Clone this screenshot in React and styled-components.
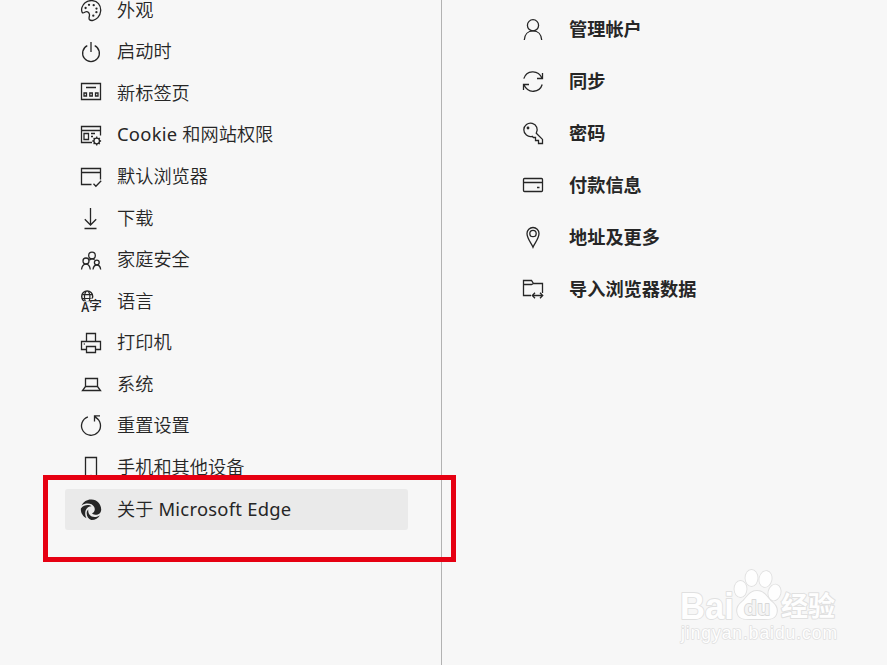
import React from 'react'
import styled, { createGlobalStyle } from 'styled-components'

const GlobalStyle = createGlobalStyle`
    *{
        box-sizing:border-box;
    }
    body{
        margin:0;
        overflow:hidden;
        background:#f7f7f7;
    }
`

const Page = styled.div`
    position:relative;
    display:flex;
    width:887px;
    height:665px;
    overflow:hidden;
    background:#f7f7f7;
    color:#262626;
    font-family:"Open Sans","Noto Sans CJK SC",sans-serif;
    font-size:18.2px;
`

const Sidebar = styled.nav`
    flex:0 0 442px;
    height:665px;
    padding:0 33px 0 65px;
    border-right:1px solid #b2b2b2;
`

const MenuList = styled.div`
    display:grid;
    grid-auto-rows:41.58px;
    margin-top:-9.9px;
`

const MenuItem = styled.div`
    display:flex;
    align-items:center;
    gap:15px;
    height:41px;
    padding-left:15px;
    border-radius:3px;
    background:${({ $active }) => ($active ? '#eaeaea' : 'transparent')};
    font-weight:350;
    line-height:20px;
    white-space:nowrap;
`

const Content = styled.main`
    display:grid;
    flex:1;
    grid-auto-rows:52px;
    align-content:start;
    padding:3px 0 0 80px;
`

const ContentItem = styled.div`
    display:flex;
    align-items:center;
    gap:25px;
    font-weight:700;
    line-height:24px;
    white-space:nowrap;
`

const Icon = styled.svg`
    flex:0 0 22px;
    width:22px;
    height:22px;
    overflow:visible;
    fill:none;
    stroke:#262626;
    stroke-width:1.3;
    .solid{
        fill:#262626;
        stroke:none;
    }
    text{
        fill:#262626;
        stroke:none;
        font-family:"Open Sans","Noto Sans CJK SC",sans-serif;
    }
`

const MenuLabel = styled.span`
    padding-bottom:2px;
`

const Latin = styled.span`
    font-family:"Noto Sans","Open Sans",sans-serif;
    font-size:18.4px;
    font-weight:400;
    letter-spacing:0.25px;
`

const Highlight = styled.div`
    position:absolute;
    left:43px;
    top:475px;
    width:413px;
    height:87px;
    border:5px solid #e60012;
`

const Watermark = styled.svg`
    position:absolute;
    left:670px;
    top:560px;
    width:180px;
    height:95px;
    fill:#fefefe;
    stroke:#e0e0e0;
    stroke-width:1.8;
    stroke-linejoin:round;
    paint-order:stroke;
    font-family:"Liberation Sans","Noto Sans CJK SC",sans-serif;
`

const icons = {
    palette: (
        <>
            <path d="M2.2 12.5C.7 9.5 2.1 5.2 5.1 2.8C9-.4 15.3-.2 18.5 3.7C21.8 7.7 21.3 13.8 17.8 17.6C15.1 20.5 10.8 21.3 9.4 19.5C8.3 18 9.9 16.2 9.4 14.2C8.8 11.8 6.8 11.2 5.2 12C4 12.7 3 13.5 2.2 12.5Z" />
            {[[5.6, 8], [9, 4.8], [13.7, 5.2], [16.5, 8.6], [16.4, 12.2], [13.3, 15.7]].map(([x, y]) => (
                <circle key={x} className="solid" cx={x} cy={y} r="1.15" />
            ))}
        </>
    ),
    power: <path d="M11 1v10M7.3 4.6A8.4 8.4 0 1 0 14.7 4.6" />,
    newTab: <path d="M1.5.5h19v16h-19zM6 4.5h10M4 10h2.500v3H4zM9.800 10h2.500v3H9.800zM15.500 10H18v3h-2.500z" />,
    cookie: (
        <>
            <path d="M12 18.5H1.500v-16h19v9M1.5 6.500h19M4 9.500h4.500v6H4zM11 9.500h4M11 12.500h2" />
            <circle cx="16.700" cy="17" r="2.800" />
            <path d="M16.700 12.500v1.800M16.700 19.700v1.800M12.300 17h1.800M19.300 17h1.800M13.600 13.900l1.200 1.200M18.600 18.900l1.200 1.200M13.600 20.100l1.200-1.200M18.600 15.100l1.200-1.200" />
        </>
    ),
    browser: <path d="M11.500 18.500h-10v-16h19v11M1.500 6.500h19M13.500 17.800l2.400 2.500 5.300-5.600" />,
    download: <path d="M10.500 0v17M4.800 11.300l5.700 5.700 5.700-5.700M4.500 20.500h12" />,
    family: (
        <>
            <circle cx="12" cy="6.500" r="3.300" />
            <circle cx="6" cy="12" r="3" />
            <circle cx="16.800" cy="13.500" r="2.400" />
            <path d="M1.500 20.500C2 17 3.500 15.200 6 15.200S9.800 17 10.300 20.500M13 20.500C13.400 17.700 14.600 16 16.800 16s3.500 1.700 3.900 4.500M9.300 11.200c1.700-1.700 3.700-1.700 5.300-.6" />
        </>
    ),
    language: (
        <>
            <circle cx="7.200" cy="5.500" r="5.500" strokeWidth="1.400" />
            <path d="M2.300 3.600h9.800M2 7.500h10.400M5.500 11C4.100 7.500 4.200 3.200 6 .4M8.900 11C10.300 7.500 10.200 3.200 8.400.4" strokeWidth="1.200" />
            <path d="M3.500 10.200h7v-2.700h5v13H1z" fill="#f7f7f7" stroke="none" />
            <text x="1.200" y="21" fontSize="13.500" fontWeight="600" textLength="8" lengthAdjust="spacingAndGlyphs">A</text>
            <text x="9.200" y="18.700" fontSize="12.500" fontWeight="500">字</text>
        </>
    ),
    printer: (
        <>
            <path d="M6.500 9V1.500h9V9M6.500 17.500h-5v-8h19v8h-5M6.500 14.500h9v6h-9z" />
            <circle className="solid" cx="4.300" cy="12" r=".7" />
        </>
    ),
    laptop: <path d="M5.500 4.500h12v8h-12zM5.500 12.500L2.500 16.500h18l-3-4" />,
    reset: <path d="M7.900 1.800A9.500 9.500 0 1 0 15.500 2.400M20 .9h-5.500v5.500M14.800 1.200l3.300 3.300" />,
    phone: (
        <>
            <path d="M5.500.5h11v21h-11z" />
            <circle className="solid" cx="11" cy="18.700" r="1" />
        </>
    ),
    edge: (
        <g className="solid">
            <path d="M1.500 6.500C3.500 2.500 7.200.3 11.500.5C17 .7 21.200 5 21.200 10.500C21.200 14 18.500 16 15.300 15.800C13.600 15.700 12.500 15 12 14.300C14.500 13.500 15.500 10.500 14.200 8C12 4 6 3.500 1.500 6.500Z" />
            <path d="M.9 9.500C4 5.700 9.200 5.300 11.500 7.300C7.500 7.500 5.200 10.600 5.200 14.200C5.200 16.200 5.800 17.800 6.500 19.300C2.800 17.500.4 13.500.9 9.500Z" />
            <path d="M8.300 10.500C7.600 14.500 10.500 18 14.500 18C16.700 18 18.600 17.300 20 16.200C18.200 19.400 14.800 21.200 11.300 21C8.500 20.200 6.600 17.500 6.700 14.200C6.700 12.500 7.300 11.200 8.300 10.500Z" />
        </g>
    ),
    account: (
        <>
            <circle cx="11" cy="7.300" r="5.600" />
            <path d="M2.300 22c.3-5.500 3.700-9.100 8.700-9.100s8.400 3.600 8.700 9.100" />
        </>
    ),
    sync: <path d="M1.800 8.600C4.300.5 15.800-1.300 20.200 8.500M20.500 3v5.500H15M20.200 14.500C17.700 22.600 6.200 24.400 1.800 14.600M1.500 20v-5.500H7" />,
    key: (
        <>
            <path d="M14.300 11.200l6.200 6.200v4.100h-4v-3h-3v-3h-2.100l-1.200-1.200A6.700 6.700 0 1 1 14.300 11.200z" />
            <circle className="solid" cx="6" cy="6" r="1.400" />
        </>
    ),
    card: <path d="M2.500 4.500h17q1 0 1 1v11q0 1-1 1h-17q-1 0-1-1v-11q0-1 1-1zM1.500 8.500h19M15 13.500h2.500" />,
    pin: (
        <>
            <path d="M11 21.200C9.500 17.500 5 12.500 5 7.500a6 6 0 0 1 12 0C17 12.500 12.500 17.500 11 21.200z" />
            <circle cx="11" cy="7.500" r="3.200" />
        </>
    ),
    folder: <path d="M9 17.500H1.500v-15h8l2 3h9v9.500M1.500 6.500h8l2-1M10.500 17.500h10M13 14.800l-2.700 2.700 2.700 2.700M18 14.800l2.700 2.700-2.700 2.700" />,
}

const menuItems = [
    { icon: 'palette', label: '外观' },
    { icon: 'power', label: '启动时' },
    { icon: 'newTab', label: '新标签页' },
    { icon: 'cookie', label: <><Latin>Cookie </Latin>和网站权限</> },
    { icon: 'browser', label: '默认浏览器' },
    { icon: 'download', label: '下载' },
    { icon: 'family', label: '家庭安全' },
    { icon: 'language', label: '语言' },
    { icon: 'printer', label: '打印机' },
    { icon: 'laptop', label: '系统' },
    { icon: 'reset', label: '重置设置' },
    { icon: 'phone', label: '手机和其他设备' },
    { icon: 'edge', label: <>关于<Latin> Microsoft Edge</Latin></>, active: true },
]

const profileItems = [
    { icon: 'account', label: '管理帐户' },
    { icon: 'sync', label: '同步' },
    { icon: 'key', label: '密码' },
    { icon: 'card', label: '付款信息' },
    { icon: 'pin', label: '地址及更多' },
    { icon: 'folder', label: '导入浏览器数据' },
]

const App = () => {
  return (
    <Page>
      <GlobalStyle />
      <Sidebar>
        <MenuList>
            {menuItems.map((item) => (
                <MenuItem key={item.icon} $active={item.active}>
                    <Icon viewBox="0 0 22 22">{icons[item.icon]}</Icon>
                    <MenuLabel>{item.label}</MenuLabel>
                </MenuItem>
            ))}
        </MenuList>
      </Sidebar>
      <Content>
        {profileItems.map((item) => (
            <ContentItem key={item.icon}>
                <Icon viewBox="0 0 22 22">{icons[item.icon]}</Icon>
                <span>{item.label}</span>
            </ContentItem>
        ))}
      </Content>
      <Highlight />
      <Watermark viewBox="0 0 180 95">
        <text x="10" y="59" fontSize="36" fontWeight="700" textLength="54" lengthAdjust="spacingAndGlyphs">Bai</text>
        <ellipse cx="70.500" cy="29" rx="6" ry="8" />
        <ellipse cx="81.500" cy="18" rx="6" ry="8" />
        <ellipse cx="95.500" cy="19" rx="6" ry="8" transform="rotate(12 95.500 19)" />
        <ellipse cx="104.500" cy="32.500" rx="6" ry="8" transform="rotate(15 104.500 32.500)" />
        <path d="M87 31C79 31 77 38 72 42C67 46 66 51 68.500 55.500C71 60 77 59 87 59S103 60 105.500 55.500C108 51 107 46 102 42C97 38 95 31 87 31Z" />
        <text x="74" y="55" fontSize="21" fontWeight="700" textLength="26" fill="#f4f4f4" stroke="#d8d8d8">du</text>
        <text x="111" y="56" fontSize="27" fontWeight="700" textLength="54" strokeWidth="2">经验</text>
        <text x="11" y="79" fontSize="17.500" textLength="156" strokeWidth="1.500">jingyan.baidu.com</text>
      </Watermark>
    </Page>
  );
};

export default App;
